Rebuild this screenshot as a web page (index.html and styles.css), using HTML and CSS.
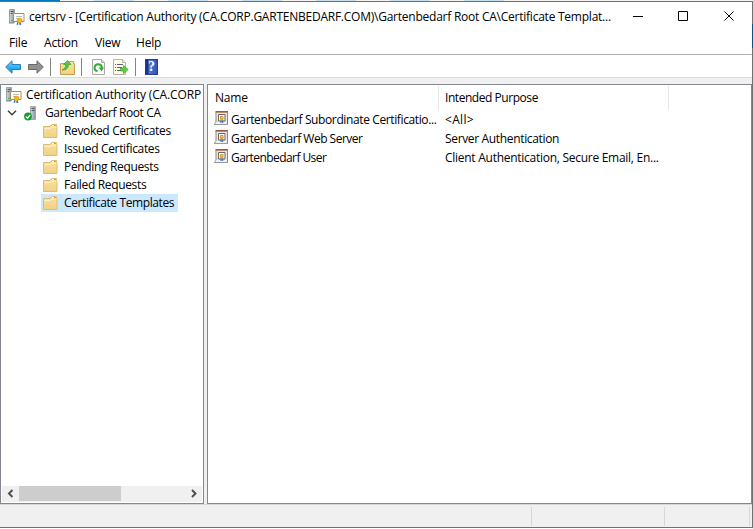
FILE: index.html
```html
<!DOCTYPE html>
<html lang="en">
<head>
<meta charset="utf-8">
<title>certsrv</title>
<link rel="stylesheet" href="styles.css">
</head>
<body>
<svg class="defs" width="0" height="0" aria-hidden="true">
  <defs>
    <linearGradient id="gold" x2="0" y2="1"><stop stop-color="#fbe3a2"/><stop offset="1" stop-color="#f0d184"/></linearGradient>
    <linearGradient id="blue" x2="0" y2="1"><stop stop-color="#8bd5ff"/><stop offset=".5" stop-color="#35b0f4"/><stop offset="1" stop-color="#1a8fdc"/></linearGradient>
    <linearGradient id="metal" x2="1" y2="0"><stop stop-color="#d5dade"/><stop offset="1" stop-color="#8b959b"/></linearGradient>
    <symbol id="folder" viewBox="0 0 15 14">
      <path d="M.5 2.500h6.500l1.500-2h5v2h.5v11h-13.500z" fill="url(#gold)" stroke="#dfbd70"/>
      <path d="M9 1.500h3" stroke="#fff"/><path d="M11 1.500h1.500" stroke="#4f9de0"/>
      <path d="M1.500 4.500h6l1-1h5" fill="none" stroke="#fff0c4"/>
    </symbol>
    <symbol id="authority" viewBox="0 0 16 16">
      <path d="M.5.500h5v13h-5z" fill="url(#metal)" stroke="#9ba2a7"/>
      <path d="M1.500 2.500h3M1.500 4.500h2" stroke="#4d565c"/><path d="M0 14h5" stroke="#888"/>
      <path d="M4.500 4.500h10.500v8h-10.500z" fill="#fffdf4" stroke="#a88d65"/>
      <path d="M7 7.500h6M7 9.500h3" stroke="#b8c0c5"/>
      <path d="M8.500 12l-1 4 2-.5zM11 12l1.500 4-2.500-.5z" fill="#1976d2"/>
      <circle cx="10.500" cy="11.500" r="2.400" fill="#f6b817" stroke="#d28b00" stroke-width=".6"/>
      <path d="M2 11.500h2" stroke="#35c544"/>
    </symbol>
    <symbol id="template" viewBox="0 0 14 15">
      <path d="M2 1v10L.3 13.500h13.200V1z" fill="#e6e6ea" stroke="#8b8888"/>
      <path d="M1.500 .5H14" stroke="#9d5946"/><path d="M1.500 1.500H14" stroke="#ba8b79"/>
      <path d="M4.500 3.500H11v6.500H4.500z" fill="#fff" stroke="#70665a"/>
      <path d="M6.500 5.500H9V8H6.500z" fill="#fff8d5" stroke="#b99654"/>
      <path d="M1.500 12h11" stroke="#fff"/><path d="M.5 13.500h13" stroke="#99999d"/>
      <path d="M7 9v3M8.700 9v3" stroke="#2d62bd"/><circle cx="7.800" cy="8" r="1.600" fill="#e6a91c"/>
    </symbol>
  </defs>
</svg>
<div class="backdrop"><i class="tab"></i><i></i><i></i><i></i><i></i><i></i><i></i></div>
<div class="window">
  <header class="titlebar">
    <svg class="app-icon" width="16" height="16"><use href="#authority"/></svg>
    <span class="title">certsrv - [Certification Authority (CA.CORP.GARTENBEDARF.COM)\Gartenbedarf Root CA\Certificate Templat...</span>
    <svg class="controls" width="136" height="30" fill="none" stroke="#000"><path d="M18 14.500h10M63.500 9.500h9v9h-9z"/><path d="M109.500 9.500l9 9M118.500 9.500l-9 9"/></svg>
  </header>
  <nav class="menu"><span class="m-file">File</span><span class="m-action">Action</span><span class="m-view">View</span><span class="m-help">Help</span></nav>
  <div class="toolbar">
    <svg class="back" width="16" height="14" viewBox="0 0 16 14"><path d="M.7 7L7 .8v3.700h8.500v5H7v3.700z" fill="url(#blue)" stroke="#267eb8"/></svg>
    <svg class="forward" width="16" height="14" viewBox="0 0 16 14"><path d="M15.300 7L9 .8v3.700H.5v5H9v3.700z" fill="#929292" stroke="#686868"/></svg>
    <i class="divider d1"></i>
    <svg class="up" width="15" height="15" viewBox="0 0 15 15"><path d="M.5 3.500h8l1-2h4v2h1v11h-14z" fill="url(#gold)" stroke="#c89e4d"/><path d="M2 10c3-1 3.700-3 3.700-5.500H3.500L7.500.5 11 4.500H8.500C8.500 8 6 10.500 2 10z" fill="#4dcc39" stroke="#269b25" stroke-width=".6"/></svg>
    <i class="divider d2"></i>
    <svg class="refresh" width="13" height="16" viewBox="0 0 13 16"><path d="M.5.5h9l3 3v12H.5z" fill="#fafafa" stroke="#aaa"/><path d="M9.500.5v3h3" fill="#ddd" stroke="#aaa"/><path d="M5.500 12.300A3.600 3.600 0 1 1 9.800 9" fill="none" stroke="#30ad32" stroke-width="2"/><path d="M6.800 8.500h5.200l-2.500 4z" fill="#30ad32"/></svg>
    <svg class="export" width="16" height="16" viewBox="0 0 16 16"><path d="M.5.5h9l3 3v12H.5z" fill="#fff9e8" stroke="#b8b29e"/><path d="M9.500.5v3h3" fill="#eee" stroke="#b8b29e"/><path d="M2 5.500h1M2 8.500h1M2 11.500h1M4 5.500h6M4 8.500h5M4 11.500h5" stroke="#5d5d7c"/><path d="M7.500 9h3V6.500l4.700 4-4.700 4V12h-3z" fill="#61cf43" stroke="#36a52a" stroke-width=".7"/></svg>
    <i class="divider d3"></i>
    <span class="help">?</span>
  </div>
  <main class="panes">
    <section class="tree">
      <div class="node root"><svg width="16" height="16"><use href="#authority"/></svg><span>Certification Authority (CA.CORP</span></div>
      <div class="node ca">
        <svg class="chevron" width="10" height="6" viewBox="0 0 10 6"><path d="M1 .8l4 4 4-4" fill="none" stroke="#404040" stroke-width="1.500"/></svg>
        <svg class="server" width="13" height="15" viewBox="0 0 13 15"><path d="M6.500.5h5v13h-5z" fill="url(#metal)" stroke="#a0a7ac"/><path d="M7.500 2.500h3M7.500 4.500h3" stroke="#4d585f"/><path d="M9 11.500h2" stroke="#42dc50"/><circle cx="4" cy="10.500" r="3.900" fill="#159c31"/><path d="M2 10.500l1.500 1.700L6.200 8.800" fill="none" stroke="#fff" stroke-width="1.300"/></svg>
        <span>Gartenbedarf Root CA</span>
      </div>
      <div class="node leaf"><svg width="15" height="14"><use href="#folder"/></svg><span>Revoked Certificates</span></div>
      <div class="node leaf"><svg width="15" height="14"><use href="#folder"/></svg><span>Issued Certificates</span></div>
      <div class="node leaf"><svg width="15" height="14"><use href="#folder"/></svg><span>Pending Requests</span></div>
      <div class="node leaf"><svg width="15" height="14"><use href="#folder"/></svg><span>Failed Requests</span></div>
      <div class="node leaf selected"><svg width="15" height="14"><use href="#folder"/></svg><span>Certificate Templates</span></div>
      <div class="scrollbar">
        <svg width="17" height="16" fill="none" stroke="#505050" stroke-width="2"><path d="M10.500 4l-3.500 3.500 3.500 3.500"/></svg><i class="thumb"></i>
        <svg class="right" width="17" height="16" fill="none" stroke="#505050" stroke-width="2"><path d="M7 4l3.500 3.500-3.500 3.500"/></svg>
      </div>
    </section>
    <section class="list">
      <div class="row head"><span class="name"><span class="l-name">Name</span></span><span class="purpose"><span class="l-purpose">Intended Purpose</span></span></div>
      <div class="row"><span class="name"><svg width="14" height="15"><use href="#template"/></svg><span class="l-sub">Gartenbedarf Subordinate Certificatio...</span></span><span class="purpose"><span class="l-all">&lt;All&gt;</span></span></div>
      <div class="row"><span class="name"><svg width="14" height="15"><use href="#template"/></svg><span class="l-web">Gartenbedarf Web Server</span></span><span class="purpose"><span class="l-auth">Server Authentication</span></span></div>
      <div class="row"><span class="name"><svg width="14" height="15"><use href="#template"/></svg><span class="l-user">Gartenbedarf User</span></span><span class="purpose"><span class="l-client">Client Authentication, Secure Email, En...</span></span></div>
    </section>
  </main>
  <footer class="status"><i></i><i></i><i></i></footer>
</div>
</body>
</html>
```
FILE: styles.css
```css
* { box-sizing: border-box; }
body { margin: 0; width: 753px; height: 529px; overflow: hidden; background: #fff; color: #000; font: 12px/18px "Open Sans", "Noto Sans", sans-serif; letter-spacing: -.2px; }
svg { display: block; flex: none; }
span { white-space: nowrap; }
.defs { position: absolute; }
.backdrop { height: 1px; display: flex; gap: 34px; background: #f4f4f4; }
.backdrop i { width: 40px; background: #c5dfed; }
.backdrop .tab { width: 60px; background: #0078bf; }
.window { position: relative; height: 527px; border: solid #707070; border-width: 1px 1px 1px 0; display: flex; flex-direction: column; background: #fff; }
/* sliver of the window behind, over the right border */
.window::after { content: ""; position: absolute; right: -1px; top: 22px; width: 1px; height: 24px; background: #10507c; }
.titlebar { height: 30px; display: flex; padding-left: 9px; }
.app-icon { margin-top: 7px; }
.title { flex: none; width: 586px; margin: 6px 0 0 4px; letter-spacing: -.24px; }
.menu { height: 23px; border-bottom: 1px solid #adadad; display: flex; padding: 2px 0 0 9px; }
.m-file { width: 35px; } .m-action { width: 51px; } .m-view { width: 41px; }
.toolbar { height: 23px; border-bottom: 1px solid #dadada; display: flex; align-items: center; padding: 2px 0 0 5px; }
.forward { margin-left: 7px; }
.divider { width: 1px; height: 18px; background: #858585; }
.d1 { margin-left: 6px; } .up { margin-left: 9px; } .d2 { margin-left: 6px; }
.refresh { margin-left: 10px; } .export { margin-left: 8px; } .d3 { margin-left: 6px; }
.help { width: 13px; height: 16px; margin-left: 9px; background: linear-gradient(90deg, #18358d 0 2px, #5877cd 3px, #3453b5); border: 1px solid #233f91; color: #fff; font: bold 14px/14px "Liberation Serif", serif; text-align: center; }
.panes { height: 426px; padding-top: 6px; background: #f0f0f0; display: flex; gap: 3px; }
.tree { width: 204px; border: 1px solid #828790; background: #fff; padding: 1px; display: flex; flex-direction: column; overflow: hidden; letter-spacing: -.34px; }
.node { height: 18px; display: flex; align-items: center; }
.root { padding-left: 4px; letter-spacing: -.14px; } .root span { margin-left: 4px; }
.ca { padding-left: 5px; letter-spacing: -.38px; } .server { margin-left: 7px; } .ca span { margin-left: 8px; }
.leaf { width: 137px; margin-left: 39px; padding-left: 2px; }
.leaf span { margin-left: 6px; }
.selected { background: #cce8ff; letter-spacing: -.39px; }
.scrollbar { margin-top: auto; height: 16px; background: #f0f0f0; display: flex; }
.thumb { width: 102px; height: 15px; background: #cdcdcd; }
.right { margin-left: auto; }
.list { flex: 1; border: 1px solid #828790; background: #fff; padding-top: 1px; }
.row { height: 19px; display: flex; align-items: center; }
.head { height: 24px; }
.name { width: 231px; display: flex; padding-left: 6px; }
.name svg { margin-right: 3px; }
.purpose { width: 230px; padding-left: 6px; }
.head .name, .head .purpose { height: 24px; border-right: 1px solid #e5e5e5; padding-top: 3px; }
.l-name { margin-left: 1px; }
.l-purpose { letter-spacing: -.45px; }
.l-sub { letter-spacing: -.38px; }
.l-all { letter-spacing: .3px; }
.l-web { letter-spacing: -.5px; }
.l-auth { letter-spacing: -.34px; }
.l-user { letter-spacing: -.57px; }
.l-client { letter-spacing: -.27px; }
.status { height: 23px; background: #f0f0f0; border-top: 1px solid #d7d7d7; display: flex; padding: 2px 2px 1px 0; }
.status i { border-right: 1px solid #d7d7d7; width: 532px; }
.status i + i { width: 133px; } .status i + i + i { width: 85px; }
```
